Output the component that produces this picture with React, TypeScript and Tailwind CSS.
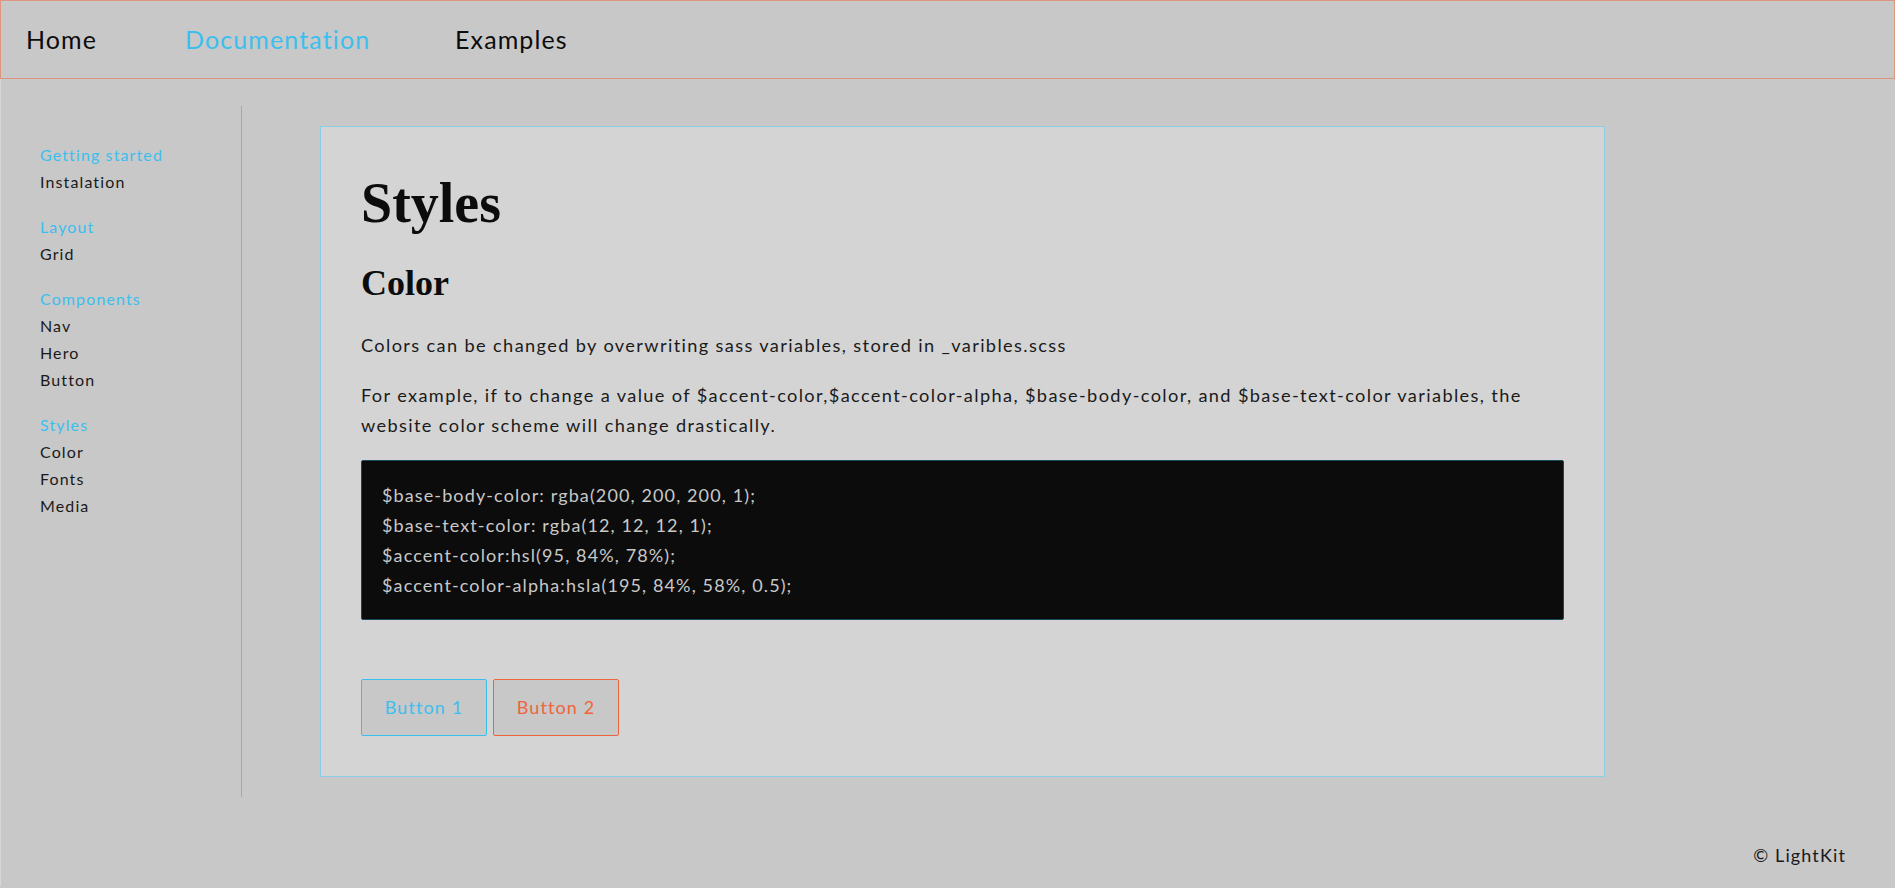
import React from "react";

const groups = [
  { title: "Getting started", items: ["Instalation"] },
  { title: "Layout", items: ["Grid"] },
  { title: "Components", items: ["Nav", "Hero", "Button"] },
  { title: "Styles", items: ["Color", "Fonts", "Media"] },
];

export default function App() {
  return (
    <div className="min-h-screen bg-[#c8c8c8] text-[#0c0c0c] font-['Lato',sans-serif] tracking-[0.07em]">
      <nav className="h-[79px] border border-[#dc967f] flex items-center pl-[25px] text-[25px]">
        <a className="w-[159px]">Home</a>
        <a className="w-[270px] text-[#3bbfee]">Documentation</a>
        <a>Examples</a>
      </nav>
      <div className="border-l border-[#d6d6d6]">
        <div className="flex pt-[27px]">
          <aside className="w-[241px] shrink-0 border-r border-[#dc967f] pl-[39px] pt-[35px] text-[16px] leading-[27px]">
            {groups.map((g) => (
              <div key={g.title} className="mb-[18px]">
                <div className="text-[#3bbfee]">{g.title}</div>
                {g.items.map((i) => (
                  <div key={i} className="text-[#1a1a1a]">
                    {i}
                  </div>
                ))}
              </div>
            ))}
          </aside>
          <main className="ml-[78px] my-[20px] w-[1285px] border border-[#8ccde6] bg-[#d4d4d4] p-10">
            <h1 className="font-['Liberation_Serif',serif] font-bold text-[56px] leading-[72px] tracking-normal">
              Styles
            </h1>
            <h2 className="mt-[20px] font-['Liberation_Serif',serif] font-bold text-[36px] leading-[48px] tracking-normal">
              Color
            </h2>
            <p className="mt-[23px] text-[18.2px] leading-[30px] tracking-[0.075em] text-[#1a1a1a]">
              Colors can be changed by overwriting sass variables, stored in _varibles.scss
            </p>
            <p className="mt-[20px] text-[18.2px] leading-[30px] tracking-[0.075em] text-[#1a1a1a]">
              For example, if to change a value of $accent-color,$accent-color-alpha, $base-body-color, and
              $base-text-color variables, the website color scheme will change drastically.
            </p>
            <pre className="mt-[20px] rounded-[2px] border border-[#1b4a5a] bg-[#0c0c0c] px-[20px] py-[19px] font-['Lato',sans-serif] text-[18px] leading-[30px] text-[#c8c8c8] whitespace-pre">
              {"$base-body-color: rgba(200, 200, 200, 1);\n$base-text-color: rgba(12, 12, 12, 1);\n$accent-color:hsl(95, 84%, 78%);\n$accent-color-alpha:hsla(195, 84%, 58%, 0.5);"}
            </pre>
            <div className="mt-[59px] flex gap-[6px]">
              <button className="flex h-[57px] w-[126px] items-center justify-center rounded-[2px] border border-[#3bbfee] bg-[#c8c8c8] text-[18px] text-[#3bbfee]">
                Button 1
              </button>
              <button className="flex h-[57px] w-[126px] items-center justify-center rounded-[2px] border border-[#f0643c] bg-[#c8c8c8] text-[18px] text-[#f0643c]">
                Button 2
              </button>
            </div>
          </main>
        </div>
        <footer className="flex justify-end pr-[49px] pt-[45px] pb-[17px] text-[18px] leading-[27px] text-[#1a1a1a]">
          © LightKit
        </footer>
      </div>
    </div>
  );
}
